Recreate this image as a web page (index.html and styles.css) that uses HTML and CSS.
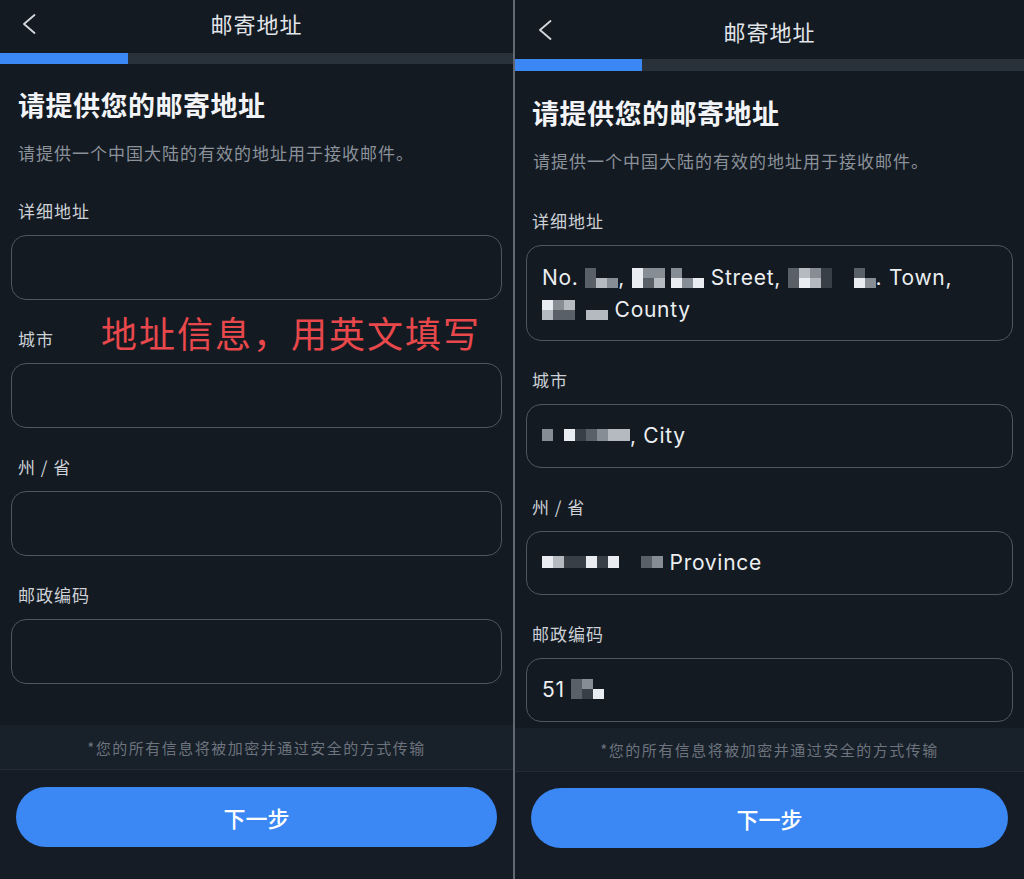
FILE: index.html
```html
<!DOCTYPE html>
<html lang="zh-CN">
<head>
<meta charset="utf-8">
<title>邮寄地址</title>
<link rel="stylesheet" href="styles.css">
</head>
<body>
<div class="screen">
  <section class="panel panel-left">
    <header class="topbar">
      <span class="back"><svg width="14" height="20" viewBox="0 0 14 20"><polyline points="12.5,1 2,10 12.5,19" fill="none" stroke="#d5d9de" stroke-width="1.8" stroke-linecap="round" stroke-linejoin="round"/></svg></span>
      <h1 class="title">邮寄地址</h1>
      <span></span>
    </header>
    <div class="progress"><div class="progress-fill"></div></div>
    <main class="content">
      <h2 class="heading">请提供您的邮寄地址</h2>
      <p class="subtitle">请提供一个中国大陆的有效的地址用于接收邮件。</p>
      <div class="field"><div class="label">详细地址</div><div class="input"></div></div>
      <div class="field"><div class="label">城市</div><div class="input"></div></div>
      <div class="field"><div class="label">州 / 省</div><div class="input"></div></div>
      <div class="field"><div class="label">邮政编码</div><div class="input"></div></div>
    </main>
    <footer class="footer">
      <div class="notice">*您的所有信息将被加密并通过安全的方式传输</div>
      <div class="actions"><button class="next">下一步</button></div>
    </footer>
    <div class="annotation">地址信息，用英文填写</div>
  </section>

  <div class="divider"></div>

  <section class="panel panel-right">
    <header class="topbar">
      <span class="back"><svg width="14" height="20" viewBox="0 0 14 20"><polyline points="12.5,1 2,10 12.5,19" fill="none" stroke="#d5d9de" stroke-width="1.8" stroke-linecap="round" stroke-linejoin="round"/></svg></span>
      <h1 class="title">邮寄地址</h1>
      <span></span>
    </header>
    <div class="progress"><div class="progress-fill"></div></div>
    <main class="content">
      <h2 class="heading">请提供您的邮寄地址</h2>
      <p class="subtitle">请提供一个中国大陆的有效的地址用于接收邮件。</p>
      <div class="field">
        <div class="label">详细地址</div>
        <div class="input tall">No. <span class="mz"><i class="m"></i><i class="m"></i><i></i><i class="l"></i><i></i><i class="g"></i></span>, <span class="mz"><i class="w"></i><i class="w"></i><i class="g"></i><i class="m"></i><i class="g"></i><i class="l"></i></span> <span class="mz"><i class="g"></i><i class="w"></i><i></i><i class="g"></i><i></i><i class="w"></i></span> Street, <span class="mz"><i class="m"></i><i class="m"></i><i class="l"></i><i class="w"></i><i class="g"></i><i class="l"></i><i class="d"></i><i class="d"></i><i></i><i></i><i></i><i></i><i class="m"></i><i class="w"></i><i></i><i class="g"></i></span>. Town,<br><span class="mz"><i class="w"></i><i class="l"></i><i class="g"></i><i class="m"></i><i class="l"></i><i class="m"></i><i></i><i></i><i></i><i class="l"></i><i></i><i class="l"></i></span> County</div>
      </div>
      <div class="field">
        <div class="label">城市</div>
        <div class="input"><span class="mz one"><i class="g"></i><i></i><i class="w"></i><i class="d"></i><i class="m"></i><i class="g"></i><i class="l"></i><i class="l"></i></span>, City</div>
      </div>
      <div class="field">
        <div class="label">州 / 省</div>
        <div class="input"><span class="mz one"><i class="w"></i><i class="l"></i><i class="d"></i><i class="d"></i><i class="w"></i><i class="d"></i><i class="w"></i><i></i><i></i><i class="m"></i><i class="g"></i></span> Province</div>
      </div>
      <div class="field">
        <div class="label">邮政编码</div>
        <div class="input">51<span class="mz post"><i class="m"></i><i class="m"></i><i class="g"></i><i class="d"></i><i></i><i class="w"></i></span></div>
      </div>
    </main>
    <footer class="footer">
      <div class="notice">*您的所有信息将被加密并通过安全的方式传输</div>
      <div class="actions"><button class="next">下一步</button></div>
    </footer>
  </section>
</div>
</body>
</html>
```
FILE: styles.css
```css
* { box-sizing: border-box; margin: 0; padding: 0; }
html, body { height: 100%; }
body {
  background: #131a22;
  font-family: Inter, "Noto Sans CJK SC", sans-serif;
  overflow: hidden;
}
.screen { display: flex; width: 1024px; height: 879px; }
.panel {
  position: relative;
  display: flex;
  flex-direction: column;
  height: 879px;
  background: #131a22;
  overflow: hidden;
}
.panel-left { width: 513px; }
.panel-right { width: 509px; }
.divider { width: 2px; background: #62686f; }

/* top bar */
.topbar {
  display: grid;
  grid-template-columns: 1fr auto 1fr;
  align-items: center;
  height: 53px;
  padding-bottom: 8px;
}
.panel-right .topbar { height: 59px; padding-bottom: 0; padding-top: 2px; }
.back { display: flex; margin-left: 22px; margin-top: 2px; }
.panel-right .back { margin-left: 23px; margin-top: -1px; }
.title {
  font-family: "Noto Sans CJK SC", sans-serif;
  font-weight: 400;
  font-size: 22px;
  letter-spacing: 1px;
  line-height: 1;
  color: #e2e5e9;
}

/* progress */
.progress { height: 11px; background: #29313a; }
.panel-right .progress { height: 12px; }
.progress-fill { width: 128px; height: 100%; background: #3b87f4; }
.panel-right .progress-fill { width: 127px; }

/* content */
.content {
  flex: 1;
  overflow: hidden;
  padding: 23px 11px 0;
}
.panel-right .content { padding-top: 24px; }
.heading {
  font-family: "Noto Sans CJK SC", sans-serif;
  font-size: 27px;
  letter-spacing: 0.5px;
  line-height: 36px;
  font-weight: 700;
  color: #f2f4f7;
  padding-left: 7px;
}
.panel-right .heading { padding-left: 6px; }
.subtitle {
  font-family: "Noto Sans CJK SC", sans-serif;
  font-size: 17px;
  letter-spacing: 1px;
  line-height: 24px;
  color: #8b9199;
  margin-top: 18px;
  padding-left: 7px;
}
.field { margin-top: 27px; }
.field:first-of-type { margin-top: 34px; }
.panel-right .field:first-of-type { margin-top: 36px; }
.label {
  font-family: "Noto Sans CJK SC", sans-serif;
  font-size: 17px;
  letter-spacing: 1px;
  line-height: 24px;
  color: #cdd1d6;
  padding-left: 7px;
  margin-bottom: 12px;
}
.panel-right .label { padding-left: 6px; }
.input {
  height: 65px;
  border: 1.5px solid #4e5660;
  border-radius: 15px;
  display: flex;
  align-items: center;
  padding: 0 15px;
  font-size: 21px;
  letter-spacing: 0.7px;
  line-height: 32px;
  color: #eceef1;
  white-space: pre;
}
.panel-right .input { height: 64px; }
.panel-right .input.tall {
  display: block;
  height: 96px;
  padding: 16px 15px;
  white-space: normal;
}

/* mosaic (blurred personal data) */
.mz {
  display: inline-grid;
  grid-template-rows: 10px 10px;
  grid-auto-flow: column;
  grid-auto-columns: 11px;
  vertical-align: middle;
  margin-top: -2px;
}
.mz.one { grid-template-rows: 12px; }
.mz.post { margin-left: 6px; }
.mz i { display: block; }
.mz .w { background: #e9ecf0; }
.mz .l { background: #b5bac1; }
.mz .g { background: #878d95; }
.mz .m { background: #5a6068; }
.mz .d { background: #393f47; }

/* footer */
.footer { flex: none; }
.notice {
  height: 45px;
  display: flex;
  align-items: center;
  justify-content: center;
  background: #18202a;
  border-bottom: 1px solid #232b34;
  font-family: "Noto Sans CJK SC", sans-serif;
  font-size: 15px;
  letter-spacing: 1.5px;
  color: #6d747d;
}
.panel-right .notice { height: 44px; }
.actions {
  padding: 17px 16px 32px;
  background: #151c25;
}
.panel-right .actions { padding: 16px 16px 31px; }
.next {
  display: block;
  width: 100%;
  height: 60px;
  border: none;
  border-radius: 30px;
  background: #3b87f4;
  color: #ffffff;
  font-family: "Noto Sans CJK SC", sans-serif;
  font-size: 22px;
  font-weight: 500;
}

/* red annotation over the screenshot */
.annotation {
  position: absolute;
  left: 101px;
  top: 312px;
  font-family: "Noto Sans CJK SC", sans-serif;
  font-size: 36px;
  letter-spacing: 2px;
  line-height: 40px;
  color: #e8484b;
}
```
